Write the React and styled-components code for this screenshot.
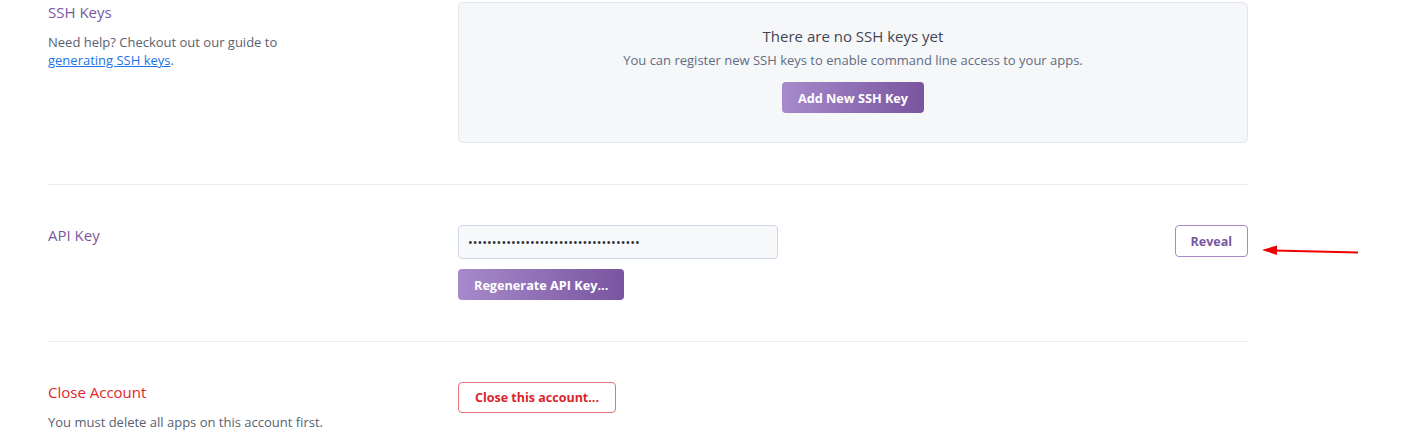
import React from "react";
import styled, { createGlobalStyle } from "styled-components";

const Global = createGlobalStyle`
  html, body { margin: 0; padding: 0; background: #fff; }
  body { font-family: "Open Sans", "Liberation Sans", sans-serif; color: #3f3f44; overflow: hidden; }
`;

const Page = styled.div`
  width: 1200px;
  margin-left: 48px;
  margin-top: -38px;
`;

const Section = styled.section`
  display: grid;
  grid-template-columns: 410px 1fr;
  padding: 40px 0 41px;
  border-bottom: ${(p) => (p.$last ? "none" : "1px solid #e7ebf0")};
  position: relative;
`;

const Side = styled.div`
  display: flex;
  flex-direction: column;
`;

const Label = styled.h3`
  margin: 0;
  font-size: 15px;
  line-height: 20px;
  font-weight: 400;
  color: ${(p) => (p.$danger ? "#e3242b" : "#79589f")};
`;

const Help = styled.p`
  margin: 11px 0 0;
  font-size: 13px;
  line-height: 18px;
  color: #596270;
  max-width: ${(p) => p.$width || 300}px;
`;

const HelpLink = styled.a`
  color: #1a73e8;
  text-decoration: underline;
`;

const EmptyPanel = styled.div`
  background: #f6f7f9;
  border: 1px solid #e3e6ea;
  border-radius: 5px;
  padding: 22px 20px 29px;
  display: flex;
  flex-direction: column;
  align-items: center;
`;

const EmptyTitle = styled.div`
  font-size: 15px;
  line-height: 22px;
  color: #3f4654;
`;

const EmptyText = styled.div`
  margin-top: 4px;
  font-size: 13px;
  line-height: 18px;
  color: #5f6d83;
`;

const PrimaryButton = styled.button`
  margin-top: ${(p) => p.$mt || 0}px;
  height: 31px;
  padding: 0 ${(p) => p.$px || 16}px;
  border: none;
  border-radius: 4px;
  background: linear-gradient(to right, #a68acb, #79559f);
  color: #fff;
  font-family: inherit;
  font-weight: 700;
  font-size: 12.7px;
  cursor: pointer;
  align-self: ${(p) => p.$align || "center"};
`;

const OutlineButton = styled.button`
  height: ${(p) => p.$h || 31}px;
  padding: 0 ${(p) => p.$px || 16}px;
  background: #fff;
  border: 1px solid ${(p) => (p.$danger ? "#e2737a" : "#a58bc6")};
  border-radius: 4px;
  color: ${(p) => (p.$danger ? "#d9252e" : "#79589f")};
  font-family: inherit;
  font-weight: 700;
  font-size: 12.5px;
  cursor: pointer;
`;

const ApiMain = styled.div`
  display: flex;
  justify-content: space-between;
  align-items: flex-start;
`;

const ApiStack = styled.div`
  display: flex;
  flex-direction: column;
  gap: 10px;
`;

const KeyInput = styled.input`
  box-sizing: border-box;
  width: 320px;
  height: 34px;
  padding: 0 9px;
  background: #f8f9fb;
  border: 1px solid #cfd7e6;
  border-radius: 4px;
  font-family: "Open Sans", sans-serif;
  font-size: 12.7px;
  color: #2f3136;
  outline: none;
`;

const Arrow = styled.svg`
  position: absolute;
  left: 1212px;
  top: 58px;
`;

export default function App() {
  return (
    <>
      <Global />
      <Page>
        <Section>
          <Side>
            <Label>SSH Keys</Label>
            <Help $width={270}>
              Need help? Checkout out our guide to{" "}
              <HelpLink href="#">generating SSH keys</HelpLink>.
            </Help>
          </Side>
          <EmptyPanel>
            <EmptyTitle>There are no SSH keys yet</EmptyTitle>
            <EmptyText>
              You can register new SSH keys to enable command line access to your apps.
            </EmptyText>
            <PrimaryButton $mt={13} $px={16}>Add New SSH Key</PrimaryButton>
          </EmptyPanel>
        </Section>

        <Section>
          <Side>
            <Label>API Key</Label>
          </Side>
          <ApiMain>
            <ApiStack>
              <KeyInput type="password" readOnly value={"x".repeat(36)} />
              <PrimaryButton $align="flex-start" $px={16}>Regenerate API Key...</PrimaryButton>
            </ApiStack>
            <OutlineButton $h={32} $px={15}>Reveal</OutlineButton>
          </ApiMain>
          <Arrow width="100" height="16" viewBox="0 0 100 16">
            <line x1="14" y1="7.5" x2="98" y2="9.5" stroke="#ee0000" strokeWidth="2.2" />
            <polygon points="2,7 17,2.5 17,12" fill="#ee0000" />
          </Arrow>
        </Section>

        <Section $last>
          <Side>
            <Label $danger>Close Account</Label>
            <Help $width={340}>You must delete all apps on this account first.</Help>
          </Side>
          <div>
            <OutlineButton $danger $px={16}>Close this account...</OutlineButton>
          </div>
        </Section>
      </Page>
    </>
  );
}
